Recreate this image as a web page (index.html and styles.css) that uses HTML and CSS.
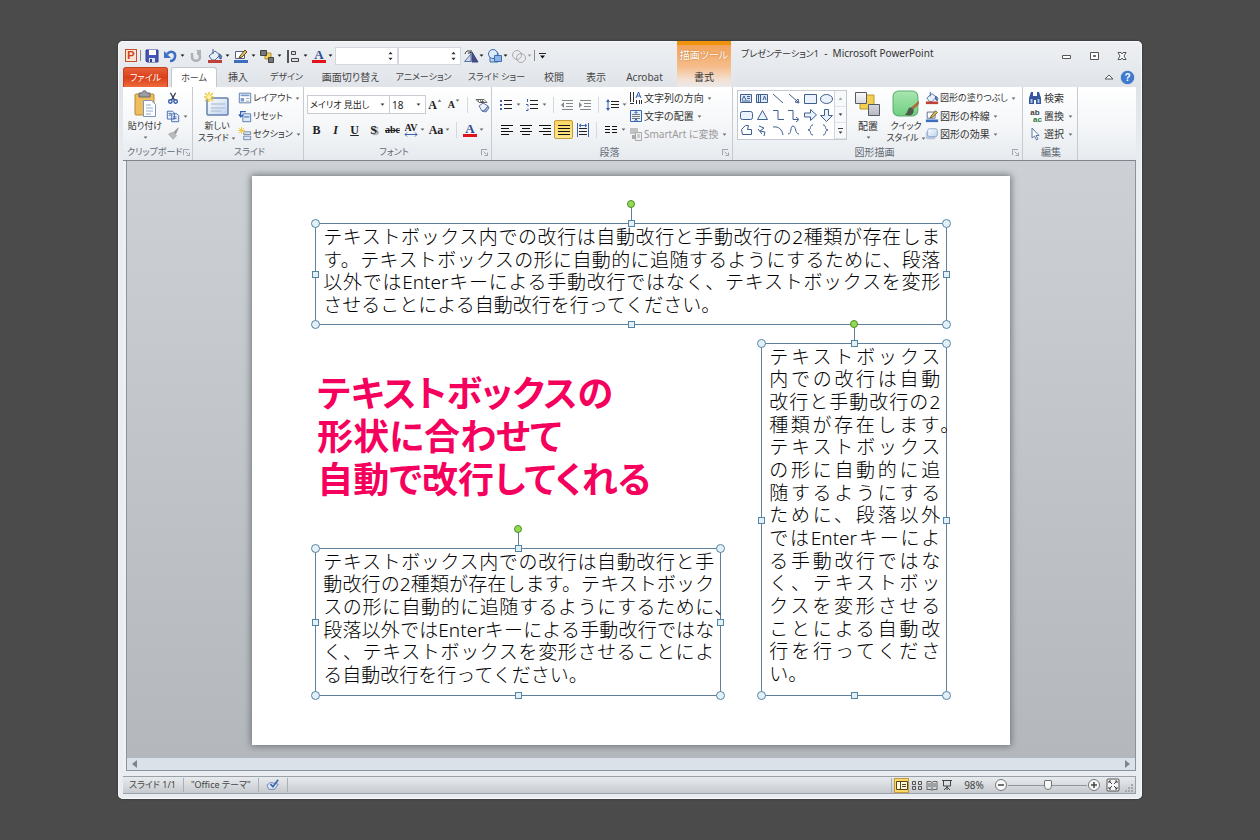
FILE: index.html
```html
<!DOCTYPE html>
<html lang="ja">
<head>
<meta charset="utf-8">
<title>プレゼンテーション1 - Microsoft PowerPoint</title>
<link rel="stylesheet" href="styles.css">
</head>
<body>
<svg class="defs" aria-hidden="true">
  <defs>
    <linearGradient id="g-blue" x1="0" y1="0" x2="1" y2="1"><stop offset="0" stop-color="#fff"/><stop offset="1" stop-color="#bcd3ee"/></linearGradient>
    <linearGradient id="g-green" x1="0" y1="0" x2="0" y2="1"><stop offset="0" stop-color="#a9e6b0"/><stop offset="1" stop-color="#6fcf80"/></linearGradient>
    <linearGradient id="g-gray" x1="0" y1="0" x2="0" y2="1"><stop offset="0" stop-color="#fafafa"/><stop offset="1" stop-color="#b4b8c0"/></linearGradient>
    <symbol id="i-caret" viewBox="0 0 6 4"><path d="M0.5 0.5h5L3 3.5z" fill="currentColor"/></symbol>
    <symbol id="i-launch" viewBox="0 0 8 8"><path d="M.5 7V.5H7M3 3l3 3M7.500 4v3.500H4" fill="none" stroke="#8f96a0"/></symbol>
    <symbol id="i-fill" viewBox="0 0 16 16"><path d="M2 8l6-5 5 4-5 5H5z" fill="#e9f0fa" stroke="#4c6c9c"/><path d="M6 1v5M12 6c3 1 3 3 2 5-2 0-2-2-2-5z" fill="#5b7fc0" stroke="#3c5a94"/><path d="M1 12h14v3H1z" fill="#c0403a"/></symbol>
    <symbol id="i-outline" viewBox="0 0 16 16"><path d="M2.500 3.500h9v7h-9z" fill="#fff" stroke="#4e617e"/><path d="M7 8l5-6 2 2-5 5-3 1z" fill="#e8c25a" stroke="#5b4a24"/><path d="M1 12h14v3H1z" fill="#3b6fbd"/></symbol>
    <symbol id="i-effect" viewBox="0 0 16 16"><rect x="1" y="5" width="11" height="9" rx="2" fill="#9db3d4" opacity=".7"/><rect x="3" y="2" width="11" height="9" rx="2" fill="url(#g-blue)" stroke="#8ba4cc"/></symbol>
    <symbol id="i-save" viewBox="0 0 16 16"><path d="M2 2h12v12H3l-1-1z" fill="#4556b8" stroke="#303d8f"/><path d="M5 2h7v5H5z" fill="#fff"/><path d="M5 10h6v4H5z" fill="#dde3f3"/><path d="M6 11h2v3H6z" fill="#303d8f"/></symbol>
    <symbol id="i-undo" viewBox="0 0 16 16"><path d="M5 6c4-4 9-2 8 3-.5 3-3 4-5 4" fill="none" stroke="#3e6fc4" stroke-width="2.500"/><path d="M2 3v7h7z" fill="#3e6fc4"/></symbol>
    <symbol id="i-redo" viewBox="0 0 16 16"><path d="M4 5v4c0 5 8 5 8 0 0-2-1-4-3-4" fill="none" stroke="#aeb1b6" stroke-width="2.500"/><path d="M8 2h5v5z" fill="#aeb1b6"/></symbol>
    <symbol id="i-arrange" viewBox="0 0 16 16"><path d="M6 5h6v6H6z" fill="#f1cd54" stroke="#b1902c"/><path d="M1.500 2.500h6v5h-6zM9.500 9.500h5v5h-5z" fill="#777" stroke="#444"/></symbol>
    <symbol id="i-align" viewBox="0 0 16 16"><path d="M3 2v13" stroke="#222" stroke-width="1.500"/><path d="M6.500 3.500h4v3h-4zM6.500 10.500h7v3h-7z" fill="#ddd" stroke="#444"/></symbol>
    <symbol id="i-rotate" viewBox="0 0 16 16"><path d="M1.500 13.500L8 6v7.500z" fill="#cfd9e8" stroke="#5b76a6"/><path d="M9 4v10h6z" fill="#4d4a8c" stroke="#334b80"/><path d="M2 6c1-4 5-4 6-1M8 2v3H5" fill="none" stroke="#333"/></symbol>
    <symbol id="i-union" viewBox="0 0 16 16"><path d="M3 5h8v9H3z" fill="#b9d2f0" stroke="#3c6dac"/><circle cx="6" cy="6" r="4.500" fill="#dceafa" stroke="#3c6dac"/><path d="M7.500 7.500h7v6h-7z" fill="#8db4e6" stroke="#3c6dac"/></symbol>
    <symbol id="i-intersect" viewBox="0 0 16 16"><circle cx="6" cy="7" r="4.500" fill="none" stroke="#aaa"/><circle cx="10" cy="10" r="4.500" fill="none" stroke="#aaa"/></symbol>
    <symbol id="i-paste" viewBox="0 0 26 28"><rect x="3" y="4" width="19" height="21" rx="1" fill="#eebd5c" stroke="#b8883a"/><path d="M7 3h3c1-3 4-3 5 0h3v4H7z" fill="#9a9da3" stroke="#66696f"/><path d="M11.500 10.500h8l4 4v12h-12z" fill="#fff" stroke="#7f95b8"/><path d="M14 15h5M14 18h7M14 21h7M14 24h5" stroke="#8facd6"/></symbol>
    <symbol id="i-cut" viewBox="0 0 16 16"><path d="M5 2l5 9M11 2L6 11" stroke="#34405a" stroke-width="1.500"/><circle cx="5" cy="12" r="2" fill="none" stroke="#2f58a8" stroke-width="1.500"/><circle cx="11" cy="12" r="2" fill="none" stroke="#2f58a8" stroke-width="1.500"/></symbol>
    <symbol id="i-copy" viewBox="0 0 16 16"><path d="M1.500 2.500h6l2 2v7h-8zM6.500 5.500h6l2 2v7h-8z" fill="#e8f0fc" stroke="#3c62aa"/><path d="M3 5h3M3 7h3M8 9h4M8 11h4" stroke="#3c62aa"/></symbol>
    <symbol id="i-brush" viewBox="0 0 16 16"><path d="M14 1L9 6l2 2z" fill="#999" stroke="#999"/><path d="M3 8l5-2 4 4-4 4c-1-2-3-3-5-6z" fill="#bbb" stroke="#aaa"/></symbol>
    <symbol id="i-newslide" viewBox="0 0 28 26"><rect x="4" y="7" width="21" height="17" rx="1" fill="url(#g-blue)" stroke="#6680ad" stroke-width="1.500"/><path d="M8 13h14M8 17h14M8 20h10" stroke="#b9c6da" stroke-width="1.500"/><path d="M6 1v10M1 6h10M2 2l8 8M10 2l-8 8" stroke="#efc93c" stroke-width="1.500"/><circle cx="6" cy="6" r="2" fill="#fff6b0"/></symbol>
    <symbol id="i-layout" viewBox="0 0 16 16"><path d="M1.500 2.500h13v11h-13z" fill="#fff" stroke="#5170a6"/><path d="M3 4h10v2H3zM3 8h4v4H3z" fill="#7c9ccc"/><path d="M9 8.500h4M9 11.500h4" stroke="#999"/></symbol>
    <symbol id="i-reset" viewBox="0 0 16 16"><path d="M5.500 5.500h9v9h-9z" fill="#dde9fa" stroke="#5170a6"/><path d="M7 8h6v2H7z" fill="#7c9ccc"/><path d="M3 9V3h6M1 6l2 3 3-2" fill="none" stroke="#2f62b8" stroke-width="1.500"/></symbol>
    <symbol id="i-section" viewBox="0 0 16 16"><path d="M6.500 5.500h8v3h-8zM6.500 10.500h8v4h-8z" fill="#dde9fa" stroke="#6b7f9e"/><path d="M4 0v8M0 4h8M1 1l6 6M7 1L1 7" stroke="#efc93c"/></symbol>
    <symbol id="i-clear" viewBox="0 0 16 16"><path d="M2 2.500h8l3 3H5z" fill="#fff" stroke="#666"/><path d="M4 4h1M6 4h1M8 4h1M7 5h3" stroke="#222"/><path d="M5 9l4-3 5 3-3 4-3 1z" fill="#eef3fb" stroke="#5f79ac"/><path d="M8 14l3-1 3-4 1 2-3 4z" fill="#9db4dc" stroke="#5f79ac"/></symbol>
    <symbol id="i-bullets" viewBox="0 0 14 14"><path d="M1 2h2v2H1zM1 6h2v2H1zM1 10h2v2H1z" fill="#3f64ad"/><path d="M5 2.500h8M5 6.500h8M5 10.500h8" stroke="#222"/></symbol>
    <symbol id="i-numbers" viewBox="0 0 14 14"><path d="M2.500 1v3M1 6.500h2v2M1 12.500h2v-2" fill="none" stroke="#3f64ad"/><path d="M5 2.500h8M5 6.500h8M5 10.500h8" stroke="#222"/></symbol>
    <symbol id="i-outdent" viewBox="0 0 14 14"><path d="M2 2.500h11M6 5.500h7M6 8.500h7M2 11.500h11" stroke="#888"/><path d="M4 4v6L1 7z" fill="#888"/></symbol>
    <symbol id="i-indent" viewBox="0 0 14 14"><path d="M2 2.500h11M6 5.500h7M6 8.500h7M2 11.500h11" stroke="#888"/><path d="M1 4v6l3-3z" fill="#888"/></symbol>
    <symbol id="i-spacing" viewBox="0 0 14 14"><path d="M3 1L1 4h4zM3 13l-2-3h4zM2.500 4h1v6h-1z" fill="#3060b4"/><path d="M6 3.500h8M6 6.500h8M6 9.500h8" stroke="#222"/></symbol>
    <symbol id="i-left" viewBox="0 0 14 14"><path d="M1 2.500h12M1 5.500h8M1 8.500h12M1 11.500h8" stroke="#111"/></symbol>
    <symbol id="i-center" viewBox="0 0 14 14"><path d="M1 2.500h12M3 5.500h8M1 8.500h12M3 11.500h8" stroke="#111"/></symbol>
    <symbol id="i-right" viewBox="0 0 14 14"><path d="M1 2.500h12M5 5.500h8M1 8.500h12M5 11.500h8" stroke="#111"/></symbol>
    <symbol id="i-justify" viewBox="0 0 14 14"><path d="M1 2.500h12M1 5.500h12M1 8.500h12M1 11.500h12" stroke="#111"/></symbol>
    <symbol id="i-distribute" viewBox="0 0 14 14"><path d="M3 5.500h8M3 8.500h8M3 11.500h8" stroke="#222"/><path d="M1.500 0v14M12.500 0v14M4 2.500h6M5 1L3 2.500 5 4M9 1l2 1.500L9 4" fill="none" stroke="#3f64ad"/></symbol>
    <symbol id="i-columns" viewBox="0 0 14 14"><path d="M1 3.500h5M1 6.500h5M1 9.500h5M8 3.500h5M8 6.500h5M8 9.500h5" stroke="#111"/></symbol>
    <symbol id="i-textdir" viewBox="0 0 14 14"><path d="M1.500 1v10M4.500 1v10M1 12.500h4M7.500 9v4M10.500 9v4M12.500 9v4" stroke="#333"/><path d="M7 7l2.500-6L12 7M8 5h3" fill="none" stroke="#2b5cb0"/></symbol>
    <symbol id="i-textpos" viewBox="0 0 14 14"><path d="M1.500 1.500h11v11h-11z" fill="#e6effb" stroke="#3f64ad"/><path d="M3 5.500h8M3 7.500h8M3 9.500h8" stroke="#777"/><path d="M7 1v3M5.500 3L7 4.500 8.500 3M7 13v-3M5.500 11.500L7 10l1.500 1.500" fill="none" stroke="#2b5cb0"/></symbol>
    <symbol id="i-smartart" viewBox="0 0 14 14"><path d="M1 1h8v6H1z" fill="#c2c2c2"/><path d="M3 8h5v4H3z" fill="#aaa"/><path d="M6.500 5.500h6v8h-6z" fill="#eee" stroke="#aaa"/><path d="M8 8h3M8 10h3" stroke="#aaa"/></symbol>
    <symbol id="i-arrange-lg" viewBox="0 0 28 26"><path d="M6 4h14v14H6z" fill="#f3cf4f" stroke="#bb982e"/><path d="M1.500 1.500h11v11h-11zM14.500 13.500h11v11h-11z" fill="url(#g-gray)" stroke="#555a66"/></symbol>
    <symbol id="i-quick" viewBox="0 0 26 26"><rect x="1" y="1" width="23" height="23" rx="5" fill="url(#g-green)" stroke="#5cae6c"/><path d="M25 10l-7 6 2 2 5-5z" fill="#a96c3c"/><path d="M18 16c-4 0-3 5-6 7 4 2 9 0 8-5z" fill="#4d5c48"/></symbol>
    <symbol id="i-find" viewBox="0 0 14 14"><path d="M3 1h2v4h4V1h2l2 6v6H8V9H6v4H1V7z" fill="#34579b"/><path d="M2.500 8h2v4h-2zM9.500 8h2v4h-2z" fill="#a9c0e4"/></symbol>
    <symbol id="i-select" viewBox="0 0 14 14"><path d="M4 1v10l2.500-2 2 4 1.500-1-2-3.500h3z" fill="#fff" stroke="#5b79a8"/></symbol>
    <symbol id="i-spell" viewBox="0 0 16 14"><path d="M1 7l4-3 9 2-4 6-7 0z" fill="#dfe9f8" stroke="#5f7dab"/><path d="M5 6l3 3 6-8" fill="none" stroke="#3c66b0" stroke-width="2"/></symbol>
    <symbol id="i-normal" viewBox="0 0 12 12"><path d="M.5 2.500h11v8H.5z" fill="#fff8dc" stroke="#57431a"/><path d="M4.500 2.500v8M6 5.500h4M6 7.500h4" fill="none" stroke="#57431a"/></symbol>
    <symbol id="i-sorter" viewBox="0 0 12 12"><path d="M1.500 2.500h3v3h-3zM7.500 2.500h3v3h-3zM1.500 7.500h3v3h-3zM7.500 7.500h3v3h-3z" fill="none" stroke="#555"/></symbol>
    <symbol id="i-reading" viewBox="0 0 12 12"><path d="M1 2.500h4l1 1 1-1h4v8H7l-1 1-1-1H1zM6 3v8M2 5h3M2 7h3M7 5h3M7 7h3" fill="none" stroke="#666"/></symbol>
    <symbol id="i-show" viewBox="0 0 12 12"><path d="M1 1.500h10M2.500 2v5h7V2M6 7v4M3 11l3-3 3 3" fill="none" stroke="#444"/></symbol>
    <symbol id="i-minus" viewBox="0 0 14 14"><circle cx="7" cy="7" r="5.500" fill="#f8f9fa" stroke="#777"/><path d="M4 7h6" stroke="#444" stroke-width="1.500"/></symbol>
    <symbol id="i-plus" viewBox="0 0 14 14"><circle cx="7" cy="7" r="5.500" fill="#f8f9fa" stroke="#777"/><path d="M4 7h6M7 4v6" stroke="#444" stroke-width="1.500"/></symbol>
    <symbol id="i-fit" viewBox="0 0 14 14"><rect x="1" y="1" width="12" height="12" rx="1" fill="#f4f5f6" stroke="#555"/><path d="M3 3l3 3M11 3L8 6M3 11l3-3M11 11L8 8M3 5V3h2M9 3h2v2M3 9v2h2M9 11h2V9" fill="none" stroke="#444"/></symbol>
  </defs>
</svg>

<div class="window">
  <header class="titlebar">
    <div class="qat">
      <span class="logo">P</span><span class="bar"></span>
      <button class="ib save" aria-label="上書き保存"><svg class="i16"><use href="#i-save"/></svg></button>
      <button class="ib split" aria-label="元に戻す"><svg class="i16"><use href="#i-undo"/></svg><svg class="caret"><use href="#i-caret"/></svg></button>
      <button class="ib" aria-label="繰り返し"><svg class="i16"><use href="#i-redo"/></svg></button>
      <button class="ib split" aria-label="塗りつぶし"><svg class="i16"><use href="#i-fill"/></svg><svg class="caret"><use href="#i-caret"/></svg></button>
      <button class="ib split" aria-label="枠線"><svg class="i16"><use href="#i-outline"/></svg><svg class="caret"><use href="#i-caret"/></svg></button>
      <button class="ib split" aria-label="配置"><svg class="i16"><use href="#i-arrange"/></svg><svg class="caret"><use href="#i-caret"/></svg></button>
      <button class="ib split" aria-label="整列"><svg class="i16"><use href="#i-align"/></svg><svg class="caret"><use href="#i-caret"/></svg></button>
      <button class="ib split" aria-label="フォントの色"><span class="fontcolor">A</span><svg class="caret"><use href="#i-caret"/></svg></button>
      <span class="spin"><input type="text" aria-label="高さ"><svg viewBox="0 0 6 10"><path d="M0.500 3h5L3 0zM0.500 7h5L3 10z" fill="#333"/></svg></span>
      <span class="spin"><input type="text" aria-label="幅"><svg viewBox="0 0 6 10"><path d="M0.500 3h5L3 0zM0.500 7h5L3 10z" fill="#333"/></svg></span>
      <button class="ib narrow" aria-label="回転"><svg class="i16"><use href="#i-rotate"/></svg><svg class="caret"><use href="#i-caret"/></svg></button>
      <button class="ib narrow" aria-label="図形の結合"><svg class="i16"><use href="#i-union"/></svg><svg class="caret"><use href="#i-caret"/></svg></button>
      <button class="ib narrow off" aria-label="図形の重なり"><svg class="i16"><use href="#i-intersect"/></svg><svg class="caret"><use href="#i-caret"/></svg></button>
      <span class="bar"></span>
      <button class="ib more" aria-label="カスタマイズ"><svg class="caret"><use href="#i-caret"/></svg></button>
    </div>
    <div class="context-title">描画ツール</div>
    <h1 class="doc-title"><span class="kana">プレゼンテーション1</span>&nbsp; -&nbsp; Microsoft PowerPoint</h1>
    <div class="win-buttons">
      <button aria-label="最小化"><svg viewBox="0 0 10 10"><path d="M1.500 4.500h8v3h-8z" fill="#fff" stroke="#555"/></svg></button>
      <button aria-label="最大化"><svg viewBox="0 0 10 10"><path d="M1.500 1.500h8v7h-8zM4.500 4.500h2v1h-2z" fill="#fff" stroke="#555"/></svg></button>
      <button aria-label="閉じる"><svg viewBox="0 0 10 10"><path d="M1 1.500h3l1 1.500 1-1.500h3L7 5l2 3.500H6L5 7 4 8.500H1L3 5z" fill="#fff" stroke="#555"/></svg></button>
    </div>
  </header>

  <nav class="tabs">
    <div class="tab-list">
      <button class="tab file kana">ファイル</button>
      <button class="tab home kana">ホーム</button>
      <button class="tab t-s">挿入</button>
      <button class="tab t-m kana">デザイン</button>
      <button class="tab t-l">画面切り替え</button>
      <button class="tab t-l kana">アニメーション</button>
      <button class="tab t-l kana">スライド ショー</button>
      <button class="tab t-s">校閲</button>
      <button class="tab t-s">表示</button>
      <button class="tab t-m">Acrobat</button>
    </div>
    <button class="tab context-tab">書式</button>
    <div class="help">
      <button class="min-ribbon" aria-label="リボンの最小化"><svg viewBox="0 0 10 8"><path d="M1 6l4-4 4 4z" fill="#fff" stroke="#555"/></svg></button>
      <button class="help-btn" aria-label="ヘルプ">?</button>
    </div>
  </nav>

  <section class="ribbon">
    <div class="group g-clip">
      <div class="body">
        <button class="big paste kana"><svg class="i-lg"><use href="#i-paste"/></svg><span>貼り付け</span><svg class="caret"><use href="#i-caret"/></svg></button>
        <div class="stack">
          <button class="row" aria-label="切り取り"><svg class="i14"><use href="#i-cut"/></svg></button>
          <button class="row" aria-label="コピー"><svg class="i14"><use href="#i-copy"/></svg><svg class="caret"><use href="#i-caret"/></svg></button>
          <button class="row" aria-label="書式のコピー"><svg class="i14"><use href="#i-brush"/></svg></button>
        </div>
      </div>
      <div class="label kana"><span>クリップボード</span><svg><use href="#i-launch"/></svg></div>
    </div>
    <div class="group g-slide">
      <div class="body">
        <button class="big new kana"><svg class="i-lg"><use href="#i-newslide"/></svg><span>新しい</span><span>スライド<svg class="caret"><use href="#i-caret"/></svg></span></button>
        <div class="stack">
          <button class="row kana"><svg class="i14"><use href="#i-layout"/></svg>レイアウト<svg class="caret"><use href="#i-caret"/></svg></button>
          <button class="row kana"><svg class="i14"><use href="#i-reset"/></svg>リセット</button>
          <button class="row kana"><svg class="i14"><use href="#i-section"/></svg>セクション<svg class="caret"><use href="#i-caret"/></svg></button>
        </div>
      </div>
      <div class="label kana"><span>スライド</span></div>
    </div>
    <div class="group g-font">
      <div class="body lines">
        <div class="line">
          <span class="combo name"><select class="kana" aria-label="フォント"><option>メイリオ 見出し</option></select><svg class="caret"><use href="#i-caret"/></svg></span>
          <span class="combo size"><select aria-label="フォント サイズ"><option>18</option></select><svg class="caret"><use href="#i-caret"/></svg></span>
          <button class="ch grow" aria-label="拡大">A<svg class="caret flip"><use href="#i-caret"/></svg></button>
          <button class="ch shrink" aria-label="縮小">A<svg class="caret"><use href="#i-caret"/></svg></button>
          <span class="vsep"></span>
          <button class="ch" aria-label="書式のクリア"><svg class="i16"><use href="#i-clear"/></svg></button>
        </div>
        <div class="line">
          <button class="ch b">B</button><button class="ch i">I</button><button class="ch u">U</button><button class="ch s">S</button><button class="ch strike">abc</button>
          <button class="ch wide"><span class="av">AV<svg viewBox="0 0 14 5"><path d="M1 2.500h12M3 .5l-2 2 2 2M11 .5l2 2-2 2" fill="none" stroke="#3f64ad"/></svg></span><svg class="caret"><use href="#i-caret"/></svg></button>
          <button class="ch wide">Aa<svg class="caret"><use href="#i-caret"/></svg></button>
          <span class="vsep"></span>
          <button class="ch wide"><span class="fontcolor">A</span><svg class="caret"><use href="#i-caret"/></svg></button>
        </div>
      </div>
      <div class="label kana"><span>フォント</span><svg><use href="#i-launch"/></svg></div>
    </div>
    <div class="group g-para">
      <div class="body">
        <div class="lines">
          <div class="line">
            <button class="pb dd" aria-label="箇条書き"><svg class="i14"><use href="#i-bullets"/></svg><svg class="caret"><use href="#i-caret"/></svg></button>
            <button class="pb dd" aria-label="段落番号"><svg class="i14"><use href="#i-numbers"/></svg><svg class="caret"><use href="#i-caret"/></svg></button>
            <span class="vsep"></span>
            <button class="pb" aria-label="インデントを減らす"><svg class="i14"><use href="#i-outdent"/></svg></button>
            <button class="pb" aria-label="インデントを増やす"><svg class="i14"><use href="#i-indent"/></svg></button>
            <span class="vsep"></span>
            <button class="pb dd" aria-label="行間"><svg class="i14"><use href="#i-spacing"/></svg><svg class="caret"><use href="#i-caret"/></svg></button>
          </div>
          <div class="line">
            <button class="pb" aria-label="左揃え"><svg class="i14"><use href="#i-left"/></svg></button>
            <button class="pb" aria-label="中央揃え"><svg class="i14"><use href="#i-center"/></svg></button>
            <button class="pb" aria-label="右揃え"><svg class="i14"><use href="#i-right"/></svg></button>
            <button class="pb on" aria-label="両端揃え"><svg class="i14"><use href="#i-justify"/></svg></button>
            <button class="pb" aria-label="均等割り付け"><svg class="i14"><use href="#i-distribute"/></svg></button>
            <span class="vsep"></span>
            <button class="pb dd" aria-label="段組み"><svg class="i14"><use href="#i-columns"/></svg><svg class="caret"><use href="#i-caret"/></svg></button>
          </div>
        </div>
        <div class="stack">
          <button class="row"><svg class="i14"><use href="#i-textdir"/></svg>文字列の方向<svg class="caret"><use href="#i-caret"/></svg></button>
          <button class="row"><svg class="i14"><use href="#i-textpos"/></svg>文字の配置<svg class="caret"><use href="#i-caret"/></svg></button>
          <button class="row off"><svg class="i14"><use href="#i-smartart"/></svg>SmartArt に変換<svg class="caret"><use href="#i-caret"/></svg></button>
        </div>
      </div>
      <div class="label"><span>段落</span><svg><use href="#i-launch"/></svg></div>
    </div>
    <div class="group g-draw">
      <div class="body">
        <div class="gallery">
          <svg class="shapes" viewBox="0 0 96 48" fill="none" stroke="#3f5f8f">
            <path d="M2.500 3.500h11v8h-11z" fill="#dfeafa"/><path d="M4 9l2-4 2 4M9 5.500h3M9 7.500h3M4 10h8"/>
            <path d="M18.500 3.500h11v8h-11z" fill="#dfeafa"/><path d="M20.500 4v7M22.500 4v7M25 9l1.500-4L28 9"/>
            <path d="M35 3l10 9M51 3l9 8M61 12l-4-1 3-3z"/>
            <path d="M66.500 3.500h12v9h-12z" fill="#eaf2fc"/><ellipse cx="88.500" cy="8" rx="6" ry="4.500" fill="#eaf2fc"/>
            <rect x="2.500" y="20.500" width="12" height="8" rx="2" fill="#eaf2fc"/><path d="M24.500 19.500l5 9h-10z" fill="#eaf2fc"/>
            <path d="M35 19.500h5v9h6M50 19.500h5v9h5M58 26l3 2.500-3 2.500"/>
            <path d="M66.500 22h6v-3.500l6 5.500-6 5.500V26h-6zM86.500 18.500h4v6h4l-6 6-6-6h4z" fill="#eaf2fc"/>
            <path d="M4.500 43.500l-1-5 4-4h3l-1 4h4v5zM21 35l5 2-4 3 5 1-1 4M20 38l4 5M35 36c6-1 9 3 10 8M50 43c4 0 2-8 5-8s2 8 6 8M75 34c-4 0-1 5-5 5 4 0 1 5 5 5M85 34c4 0 1 5 5 5-4 0-1 5-5 5"/>
          </svg>
          <div class="scroll"><button aria-label="上" class="off"><svg class="caret flip"><use href="#i-caret"/></svg></button><button aria-label="下"><svg class="caret"><use href="#i-caret"/></svg></button><button class="last" aria-label="その他"><svg class="caret"><use href="#i-caret"/></svg></button></div>
        </div>
        <button class="big"><svg class="i-lg"><use href="#i-arrange-lg"/></svg><span>配置</span><svg class="caret"><use href="#i-caret"/></svg></button>
        <button class="big kana"><svg class="i-lg"><use href="#i-quick"/></svg><span>クイック</span><span>スタイル<svg class="caret"><use href="#i-caret"/></svg></span></button>
        <div class="stack">
          <button class="row kana"><svg class="i14"><use href="#i-fill"/></svg>図形の塗りつぶし<svg class="caret"><use href="#i-caret"/></svg></button>
          <button class="row"><svg class="i14"><use href="#i-outline"/></svg>図形の枠線<svg class="caret"><use href="#i-caret"/></svg></button>
          <button class="row"><svg class="i14"><use href="#i-effect"/></svg>図形の効果<svg class="caret"><use href="#i-caret"/></svg></button>
        </div>
      </div>
      <div class="label"><span>図形描画</span><svg><use href="#i-launch"/></svg></div>
    </div>
    <div class="group g-edit">
      <div class="body">
        <div class="stack">
          <button class="row"><svg class="i14"><use href="#i-find"/></svg>検索</button>
          <button class="row"><span class="replace"><b>ab</b><i>ac</i></span>置換<svg class="caret"><use href="#i-caret"/></svg></button>
          <button class="row"><svg class="i14"><use href="#i-select"/></svg>選択<svg class="caret"><use href="#i-caret"/></svg></button>
        </div>
      </div>
      <div class="label"><span>編集</span></div>
    </div>
  </section>

  <main class="work">
    <div class="canvas">
      <article class="slide">
        <h2 class="callout">テキストボックスの<br>形状に合わせて<br>自動で改行してくれる</h2>
        <div class="textbox box-top">
          <span class="stem"></span><span class="h rot"></span>
          <span class="h c nw"></span><span class="h c ne"></span><span class="h c sw"></span><span class="h c se"></span>
          <span class="h n"></span><span class="h s"></span><span class="h w"></span><span class="h e"></span>
          <span class="ln">テキストボックス内での改行は自動改行と手動改行の2種類が存在しま</span>
          <span class="ln">す。テキストボックスの形に自動的に追随するようにするために、段落</span>
          <span class="ln">以外ではEnterキーによる手動改行ではなく、テキストボックスを変形</span>
          <span class="ln last">させることによる自動改行を行ってください。</span>
        </div>
        <div class="textbox box-right">
          <span class="stem"></span><span class="h rot"></span>
          <span class="h c nw"></span><span class="h c ne"></span><span class="h c sw"></span><span class="h c se"></span>
          <span class="h n"></span><span class="h s"></span><span class="h w"></span><span class="h e"></span>
          <span class="ln">テキストボックス</span>
          <span class="ln">内での改行は自動</span>
          <span class="ln">改行と手動改行の2</span>
          <span class="ln hang">種類が存在します。</span>
          <span class="ln">テキストボックス</span>
          <span class="ln">の形に自動的に追</span>
          <span class="ln">随するようにする</span>
          <span class="ln">ために、段落以外</span>
          <span class="ln">ではEnterキーによ</span>
          <span class="ln">る手動改行ではな</span>
          <span class="ln">く、テキストボッ</span>
          <span class="ln">クスを変形させる</span>
          <span class="ln">ことによる自動改</span>
          <span class="ln">行を行ってくださ</span>
          <span class="ln last">い。</span>
        </div>
        <div class="textbox box-left">
          <span class="stem"></span><span class="h rot"></span>
          <span class="h c nw"></span><span class="h c ne"></span><span class="h c sw"></span><span class="h c se"></span>
          <span class="h n"></span><span class="h s"></span><span class="h w"></span><span class="h e"></span>
          <span class="ln">テキストボックス内での改行は自動改行と手</span>
          <span class="ln">動改行の2種類が存在します。テキストボック</span>
          <span class="ln hang">スの形に自動的に追随するようにするために、</span>
          <span class="ln">段落以外ではEnterキーによる手動改行ではな</span>
          <span class="ln">く、テキストボックスを変形させることによ</span>
          <span class="ln last">る自動改行を行ってください。</span>
        </div>
      </article>
    </div>
    <div class="hscroll">
      <button aria-label="左へ"><svg viewBox="0 0 5 8"><path d="M5 0v8L0 4z" fill="#7d848e"/></svg></button>
      <button aria-label="右へ"><svg viewBox="0 0 5 8"><path d="M0 0v8l5-4z" fill="#7d848e"/></svg></button>
    </div>
  </main>

  <footer class="status">
    <span class="cell kana">スライド 1/1</span>
    <span class="cell kana">"Office テーマ"</span>
    <span class="cell"><svg class="i-spell"><use href="#i-spell"/></svg></span>
    <div class="views">
      <button class="on" aria-label="標準"><svg><use href="#i-normal"/></svg></button>
      <button aria-label="スライド一覧"><svg><use href="#i-sorter"/></svg></button>
      <button aria-label="閲覧表示"><svg><use href="#i-reading"/></svg></button>
      <button aria-label="スライド ショー"><svg><use href="#i-show"/></svg></button>
    </div>
    <span class="percent">98%</span>
    <button aria-label="縮小"><svg class="i14"><use href="#i-minus"/></svg></button>
    <input class="zoom" type="range" min="0" max="100" value="50" aria-label="ズーム">
    <button aria-label="拡大"><svg class="i14"><use href="#i-plus"/></svg></button>
    <button class="fit" aria-label="ウィンドウに合わせる"><svg class="i14"><use href="#i-fit"/></svg></button>
    <svg class="grip" viewBox="0 0 10 10"><path d="M7 1h2v2H7zM4 4h2v2H4zM7 4h2v2H7zM1 7h2v2H1zM4 7h2v2H4zM7 7h2v2H7z" fill="#a5a9af"/></svg>
  </footer>
</div>
</body>
</html>
```
FILE: styles.css
```css
* { box-sizing: border-box; }
body {
  margin: 0;
  min-height: 100vh;
  padding: 41px 118px;
  display: flex;
  background: #4b4b4b;
  color: #333;
  font: 10px/14px "Noto Sans", "Noto Sans CJK JP", sans-serif;
}
.defs { position: absolute; width: 0; height: 0; }
svg { display: block; flex: none; }
button {
  display: flex;
  align-items: center;
  border: 0;
  padding: 0;
  background: none;
  color: inherit;
  font: inherit;
  font-feature-settings: "palt";
  white-space: nowrap;
}
.i14 { width: 14px; height: 14px; }
.i16 { width: 16px; height: 16px; }
.caret { width: 5px; height: 3px; }
.flip { transform: rotate(180deg); }
.off { color: #9a9a9a; }

.window {
  flex: 1;
  display: flex;
  flex-direction: column;
  padding: 0 6px 5px 5px;
  border-radius: 5px;
  background: linear-gradient(#eef0f3, #e0e4e9 46px, #e9edf2 120px);
  box-shadow: inset 0 0 0 1px #f6f8fa, 0 0 2px #222;
}

/* title bar */
.titlebar { display: flex; height: 26px; }
.qat { flex: 0 0 554px; display: flex; align-items: center; padding-top: 3px; color: #111; }
.logo {
  width: 12px; height: 13px; margin: 0 2px;
  border: 1px solid #c4512c; background: #fbe3d6; color: #cc4218;
  font: bold 11px/11px "Liberation Sans", sans-serif; text-align: center;
}
.bar { width: 1px; height: 11px; margin: 0 2px 0 1px; background: #888; }
.ib { justify-content: center; width: 18px; height: 18px; margin-left: 1px; }
.ib.save { width: 16px; }
.ib.split { width: 25px; gap: 2px; }
.ib.narrow { width: 23px; gap: 0; }
.ib.more { width: 9px; }
.ib.more .caret { width: 7px; height: 6px; border-top: 1px solid #222; padding-top: 1px; }
.fontcolor {
  width: 14px; height: 14px; border-bottom: 3px solid #e3131c;
  color: #2a4c8e; font: bold 13px/11px "Liberation Serif", serif; text-align: center;
}
.spin { display: flex; align-items: center; width: 63px; height: 18px; padding-right: 4px; background: #fff; border: 1px solid #d3d8df; }
.spin input { flex: 1; min-width: 0; height: 14px; border: 0; padding: 0 2px; background: none; font: inherit; }
.spin svg { width: 5px; height: 10px; }
.context-title {
  flex: 0 0 54px; padding-top: 4px; text-align: center; color: #fff; white-space: nowrap; overflow: hidden;
  border-top: 4px solid #f0920c; background: linear-gradient(#f2a35c, #f6bd8c);
  font-feature-settings: "palt"; line-height: 12px; text-shadow: 0 0 2px #b8661c;
}
.doc-title { flex: 1; margin: 0; padding: 5px 0 0 10px; font-size: 10px; line-height: 14px; font-weight: 400; font-feature-settings: "palt"; white-space: nowrap; }
.win-buttons { display: flex; align-items: center; gap: 18px; padding: 3px 9px 0 0; }
.win-buttons svg { width: 10px; height: 10px; }

/* tabs */
.tabs { display: flex; height: 20px; }
.tab-list { flex: 0 0 554px; display: flex; align-items: stretch; }
.tab { justify-content: center; color: #444; }
.file { width: 45px; margin-right: 3px; border-radius: 3px 3px 0 0; color: #fff; border: 1px solid #c4401c; border-bottom: 0; background: linear-gradient(#e8603a, #d9401a 50%, #f06a3a); }
.home { width: 46px; border-radius: 3px 3px 0 0; border: 1px solid #c3c8cf; border-bottom: 0; background: #fff; }
.t-s { width: 42px; }
.t-m { width: 55px; }
.t-l { width: 73px; }
.context-tab { flex: 0 0 54px; background: linear-gradient(#f6bd8c, #f3dfd0 60%, #ebe9e9); color: #333; }
.help { flex: 1; display: flex; justify-content: flex-end; align-items: center; gap: 7px; padding-right: 2px; }
.min-ribbon svg { width: 10px; height: 8px; }
.help-btn { justify-content: center; width: 13px; height: 13px; border-radius: 50%; background: #3d7ad0; color: #fff; font: bold 10px/13px "Liberation Sans", sans-serif; box-shadow: 0 0 1px #1f4f98; }

/* ribbon */
.ribbon { display: flex; height: 74px; background: linear-gradient(#fff, #f4f6f8 55%, #e6eaee); border-bottom: 1px solid #7e858e; }
.group { display: flex; flex-direction: column; border-right: 1px solid #c6cbd1; }
.g-clip { width: 70px; padding-left: 4px; }
.g-slide { width: 111px; padding-left: 6px; }
.g-font { width: 188px; padding-left: 3px; }
.g-para { width: 241px; padding-left: 5px; }
.g-draw { width: 290px; padding-left: 4px; }
.g-edit { width: 55px; padding-left: 5px; }
.body { flex: 1; display: flex; padding-top: 2px; }
.label { display: flex; align-items: center; height: 14px; margin-bottom: 1px; padding-right: 3px; color: #626a76; font-feature-settings: "palt"; }
.label span { flex: 1; text-align: center; white-space: nowrap; }
.label svg { width: 7px; height: 7px; }
.stack { display: flex; flex-direction: column; }
.row { height: 18px; gap: 1px; }
.row .caret, .big .caret { margin-left: 2px; color: #666; }
.big { flex-direction: column; width: 38px; height: 54px; padding-top: 1px; line-height: 12px; }
.big .i-lg { width: 28px; height: 28px; margin-bottom: 2px; }
.big span { display: flex; align-items: center; }
.big > .caret { margin: 4px 0 0; }
.paste { width: 36px; margin-right: 3px; }
.new { width: 36px; margin-right: 3px; }
.lines { display: flex; flex-direction: column; padding-top: 3px; }
.body.lines { padding-top: 5px; }
.line { display: flex; align-items: center; height: 25px; }
.combo { display: flex; align-items: center; height: 19px; padding-right: 4px; border: 1px solid #c9cdd3; background: #fff; }
.combo.name { width: 84px; }
.combo.size { width: 36px; border-left: 0; }
.combo select { flex: 1; min-width: 0; height: 16px; padding: 0 0 0 2px; border: 0; background: none; color: #222; appearance: none; font: inherit; font-feature-settings: "palt"; }
.ch { justify-content: center; width: 19px; height: 18px; color: #222; font: bold 12px/16px "Liberation Serif", serif; }
.grow .caret, .shrink .caret { align-self: flex-start; margin-top: 3px; color: #3f64ad; }
.shrink { font-size: 10px; }
.ch.i { font-style: italic; }
.ch.u { text-decoration: underline; }
.ch.s { text-shadow: 2px 1px 1px #777; }
.ch.strike { font-size: 10px; text-decoration: line-through; }
.ch.wide { width: 25px; gap: 2px; }
.ch .caret, .pb .caret { color: #666; }
.av { font-size: 10px; line-height: 9px; }
.av svg { width: 14px; height: 5px; }
.vsep { width: 1px; height: 16px; margin: 0 4px; background: #d5d9de; }
.pb { justify-content: center; width: 19px; height: 19px; }
.pb.dd { width: 27px; gap: 3px; }
.pb.on { border: 1px solid #c29a3a; border-radius: 2px; background: linear-gradient(#fbd564, #fee88c); }
.g-para .lines { width: 132px; }
.gallery { display: flex; width: 110px; height: 50px; margin: 1px 2px 0 0; border: 1px solid #c3c9d1; background: #fff; }
.shapes { width: 96px; height: 48px; }
.scroll { flex: 1; display: flex; flex-direction: column; border-left: 1px solid #d2d7de; }
.scroll button { flex: 1; justify-content: center; border-bottom: 1px solid #e0e4e9; background: #f8f9fb; }
.scroll .last .caret { height: 6px; padding-top: 2px; border-top: 1px solid #444; }
.replace { display: flex; flex-direction: column; width: 14px; color: #444; font: 8px/7px "Liberation Sans", sans-serif; }
.replace i { align-self: flex-end; color: #2c7a3c; font-style: normal; font-weight: bold; }
.g-edit .row { gap: 2px; }

/* work area */
.work { flex: 1; display: flex; flex-direction: column; padding: 0 0 0 3px; background: #eef1f4; }
.canvas { flex: 1; display: grid; place-items: center; padding-top: 2px; background: linear-gradient(#cdd1d5, #b4b8bd); box-shadow: inset 1px 0 #8b929b, inset -1px 0 #8b929b; }
.slide { position: relative; width: 75%; aspect-ratio: 4 / 3; background: #fff; box-shadow: 0 0 7px 1px #6d7278; }
.callout { position: absolute; left: 65px; top: 194px; margin: 0; color: #f5005c; font: bold 36px/43px "Noto Sans CJK JP", sans-serif; font-feature-settings: "palt"; white-space: nowrap; }
.textbox { position: absolute; display: grid; grid-auto-rows: 1fr; align-items: center; border: 1px solid #5f7f9b; color: #000; font: 300 19px/22px "Noto Sans", "Noto Sans CJK JP", sans-serif; }
.box-top { left: 63px; top: 47px; width: 632px; height: 102px; padding: 1px 6px 8px 7px; }
.box-right { left: 509px; top: 167px; width: 186px; height: 353px; padding: 1px 6px 10px 7px; }
.box-left { left: 63px; top: 372px; width: 406px; height: 148px; padding: 1px 6px 9px 7px; }
.ln { text-align: justify; text-align-last: justify; white-space: nowrap; }
.ln.last { text-align-last: left; }
.ln.hang { margin-right: -19px; }
.h { position: absolute; width: 7px; height: 7px; border: 1px solid #5585a3; background: #e2f1f8; }
.c { width: 9px; height: 9px; border-radius: 50%; }
.nw { left: -5px; top: -5px; }
.ne { right: -5px; top: -5px; }
.sw { left: -5px; bottom: -5px; }
.se { right: -5px; bottom: -5px; }
.n { left: calc(50% - 3px); top: -4px; }
.s { left: calc(50% - 3px); bottom: -4px; }
.w { left: -4px; top: calc(50% - 3px); }
.e { right: -4px; top: calc(50% - 3px); }
.rot { left: calc(50% - 4px); top: -24px; width: 8px; height: 8px; border-color: #4c8a2c; border-radius: 50%; background: #93dc50; }
.stem { position: absolute; left: 50%; top: -18px; width: 1px; height: 18px; background: #5f7f9b; }
.hscroll { display: flex; justify-content: space-between; align-items: center; height: 13px; padding: 0 5px; border: 1px solid #8b929b; border-top: 0; background: #dbe1e8; }
.hscroll svg { width: 5px; height: 8px; }

/* status bar */
.status { display: flex; align-items: center; height: 18px; margin-top: 5px; padding: 0 1px 0 6px; border: 1px solid #9aa0a8; border-width: 1px 1px 1px 0; background: linear-gradient(#e8ebee, #c6cace); color: #444; font-feature-settings: "palt"; }
.cell { display: flex; align-items: center; justify-content: center; height: 14px; padding: 0 7px; border-right: 1px solid #aab0b7; white-space: nowrap; }
.cell:first-child { padding-left: 0; }
.i-spell { width: 14px; height: 12px; }
.views { display: flex; margin-left: auto; border-left: 1px solid #aab0b7; padding-left: 2px; }
.views button { justify-content: center; width: 15px; height: 15px; }
.views svg { width: 12px; height: 12px; }
.views .on { border: 1px solid #c29a3a; background: #fdd865; }
.percent { width: 40px; text-align: center; }
.zoom { width: 79px; height: 14px; margin: 0; appearance: none; background: linear-gradient(#8f959d, #8f959d) center / 100% 1px no-repeat; }
.zoom::-webkit-slider-thumb { appearance: none; width: 8px; height: 10px; border: 1px solid #777; border-radius: 1px 1px 4px 4px; background: #f6f7f8; }
.fit { margin: 0 4px 0 5px; }
.grip { width: 10px; height: 10px; align-self: flex-end; }

/* compact size for labels written mostly in kana */
.kana, .combo .kana { font-size: 9px; }
```
